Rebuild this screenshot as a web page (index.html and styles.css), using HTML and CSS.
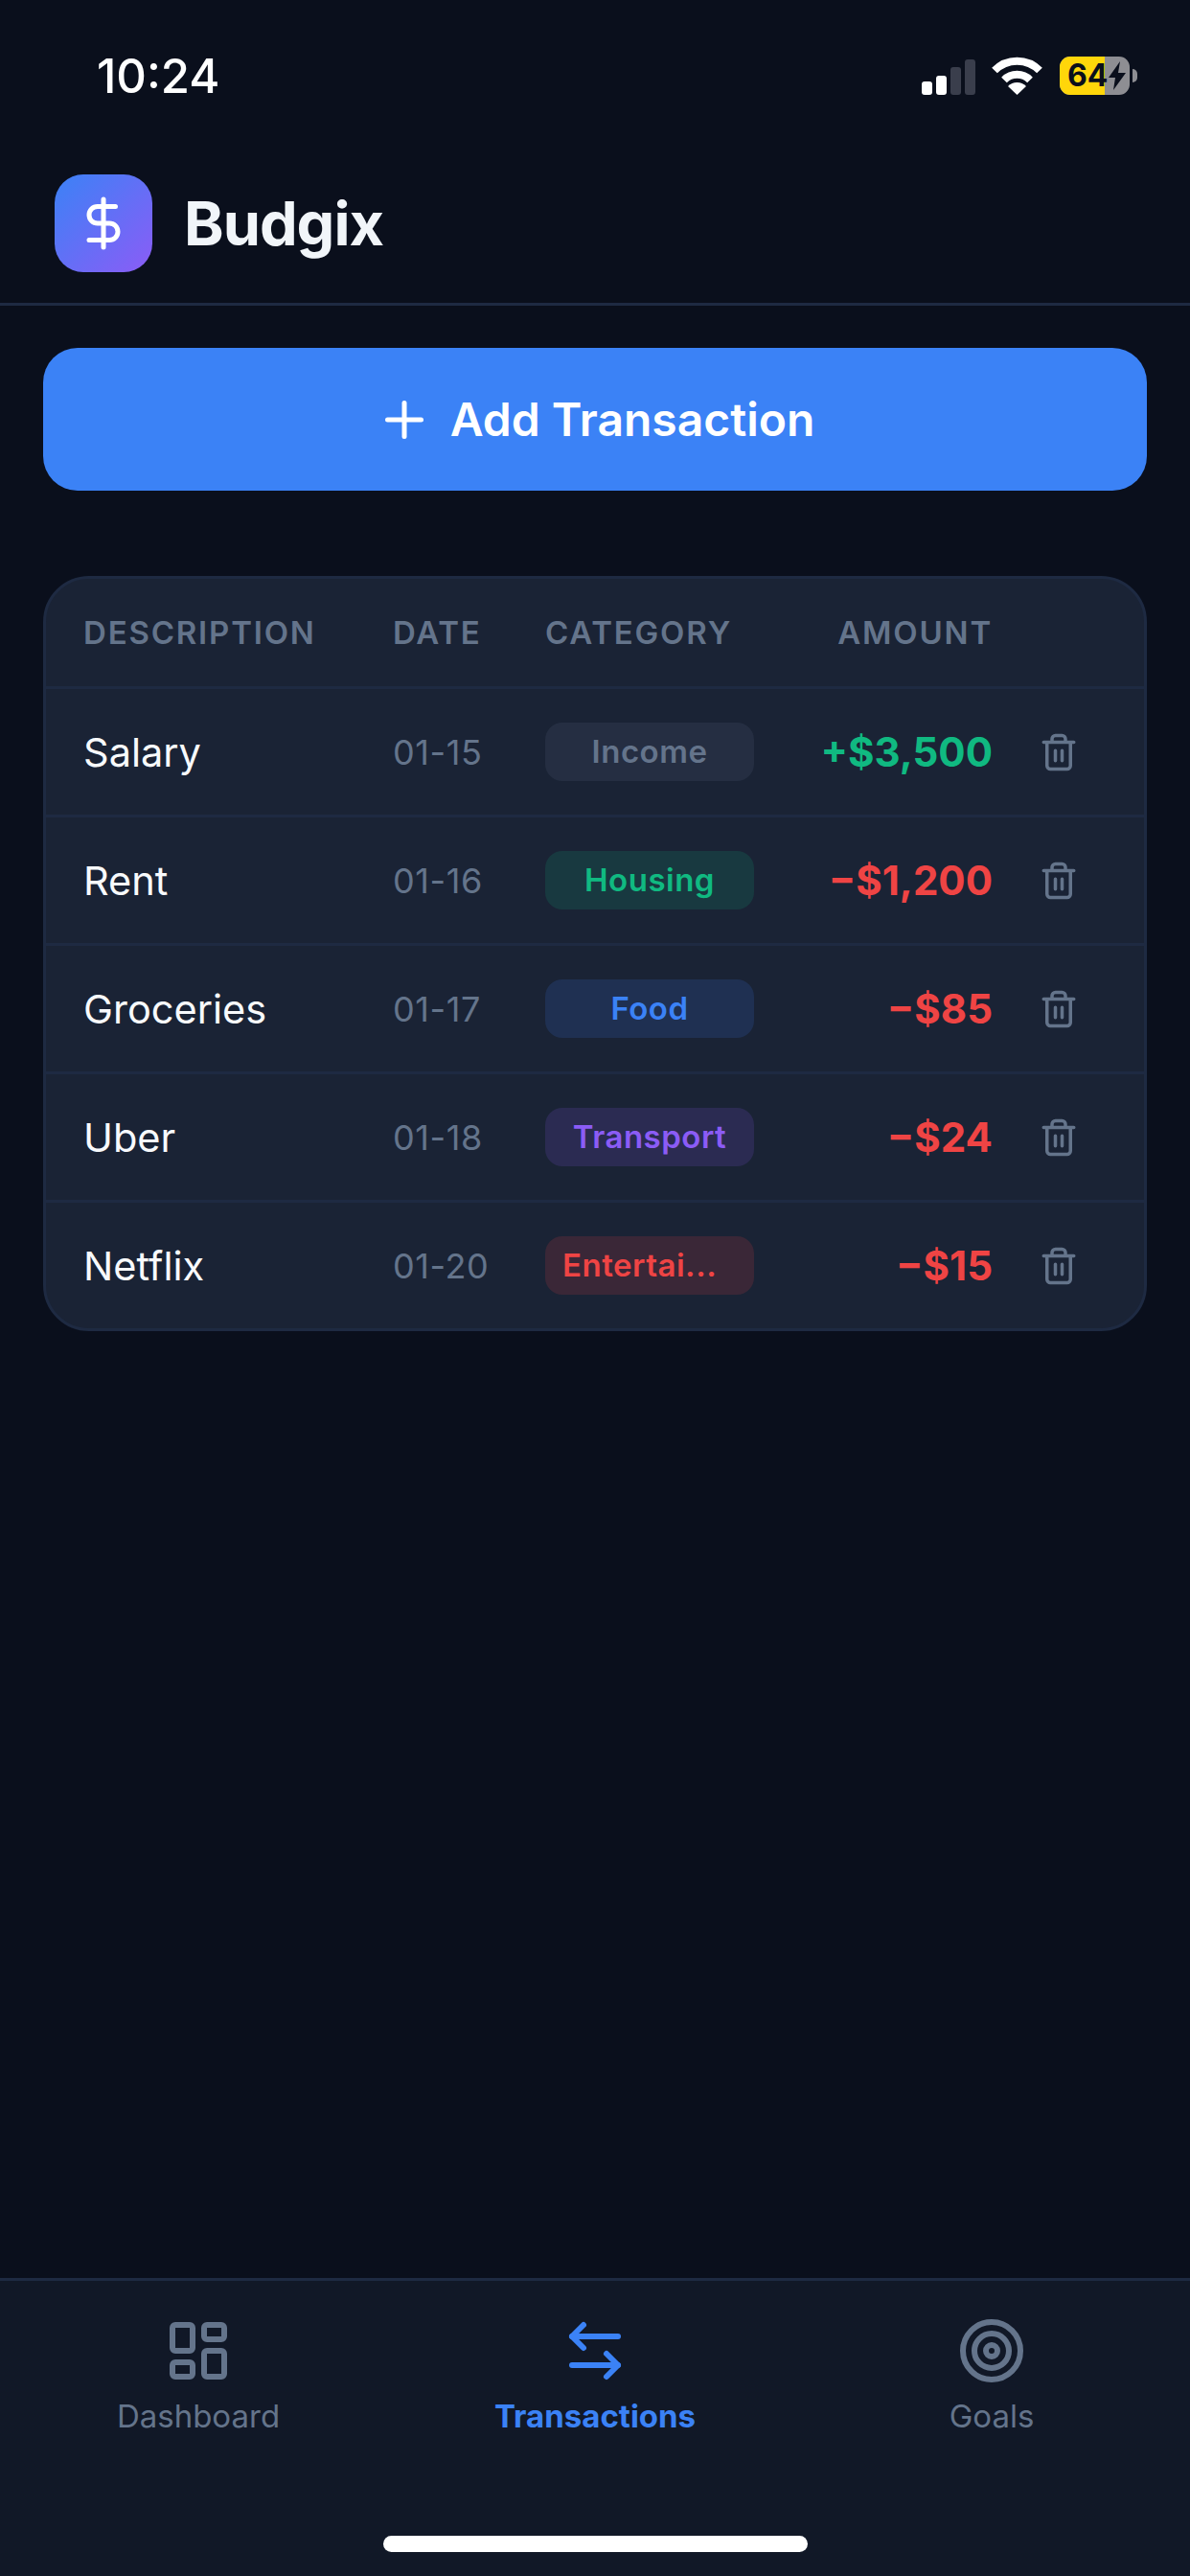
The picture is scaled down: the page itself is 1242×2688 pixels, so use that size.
FILE: index.html
```html
<!DOCTYPE html>
<html lang="en">
<head>
    <title>Budgix</title>
    <link rel="stylesheet" href="styles.css">
</head>
<body>
    <div id="app">
        <div class="status-bar">
            <div class="time">10:24</div>
            <div class="status-icons">
                <div class="signal">
                    <span class="bar bar-1"></span>
                    <span class="bar bar-2"></span>
                    <span class="bar bar-3"></span>
                    <span class="bar bar-4"></span>
                </div>
                <svg class="wifi" width="53" height="40" viewBox="0 0 53 40" fill="none" stroke="#fff" stroke-width="8">
                    <path d="M3 14.5a33 33 0 0 1 47 0"/>
                    <path d="M13 24.5a19 19 0 0 1 27 0"/>
                    <path d="M26.5 40 17 31a13.500 13.500 0 0 1 19 0z" fill="#fff" stroke="none"/>
                </svg>
                <div class="battery">
                    <div class="battery-body">
                        <div class="battery-fill"></div>
                        <span class="battery-num">64</span>
                        <svg class="bolt" width="20" height="30" viewBox="0 0 20 30">
                            <path d="M13 0 1 17h7l-2 13L19 12h-8z" fill="#0a0f1c"/>
                        </svg>
                    </div>
                    <span class="battery-cap"></span>
                </div>
            </div>
        </div>

        <header class="header">
            <div class="logo">
                <svg width="60" height="60" viewBox="0 0 24 24" fill="none" stroke="#fff" stroke-width="2" stroke-linecap="round" stroke-linejoin="round">
                    <line x1="12" x2="12" y1="2" y2="22"/>
                    <path d="M17 5H9.500a3.500 3.500 0 0 0 0 7h5a3.500 3.500 0 0 1 0 7H6"/>
                </svg>
            </div>
            <h1 class="title">Budgix</h1>
        </header>

        <main class="main">
            <button class="btn-add">
                <svg width="60" height="60" viewBox="0 0 24 24" fill="none" stroke="#fff" stroke-width="2" stroke-linecap="round" stroke-linejoin="round">
                    <path d="M5 12h14"/>
                    <path d="M12 5v14"/>
                </svg>
                Add Transaction
            </button>

            <div class="table">
                <div class="row row-head">
                    <div>DESCRIPTION</div>
                    <div>DATE</div>
                    <div>CATEGORY</div>
                    <div class="cell-amount">AMOUNT</div>
                    <div></div>
                </div>
                <div class="row">
                    <div class="desc">Salary</div>
                    <div class="date">01-15</div>
                    <div class="pill pill-income">Income</div>
                    <div class="cell-amount amount-plus">+$3,500</div>
                    <div class="cell-trash">
                        <svg class="trash" width="42" height="42" viewBox="0 0 24 24"><path d="M3 6h18M19 6v14c0 1-1 2-2 2H7c-1 0-2-1-2-2V6M8 6V4c0-1 1-2 2-2h4c1 0 2 1 2 2v2M10 11v6M14 11v6"/></svg>
                    </div>
                </div>
                <div class="row">
                    <div class="desc">Rent</div>
                    <div class="date">01-16</div>
                    <div class="pill pill-housing">Housing</div>
                    <div class="cell-amount amount-minus">−$1,200</div>
                    <div class="cell-trash">
                        <svg class="trash" width="42" height="42" viewBox="0 0 24 24"><path d="M3 6h18M19 6v14c0 1-1 2-2 2H7c-1 0-2-1-2-2V6M8 6V4c0-1 1-2 2-2h4c1 0 2 1 2 2v2M10 11v6M14 11v6"/></svg>
                    </div>
                </div>
                <div class="row">
                    <div class="desc">Groceries</div>
                    <div class="date">01-17</div>
                    <div class="pill pill-food">Food</div>
                    <div class="cell-amount amount-minus">−$85</div>
                    <div class="cell-trash">
                        <svg class="trash" width="42" height="42" viewBox="0 0 24 24"><path d="M3 6h18M19 6v14c0 1-1 2-2 2H7c-1 0-2-1-2-2V6M8 6V4c0-1 1-2 2-2h4c1 0 2 1 2 2v2M10 11v6M14 11v6"/></svg>
                    </div>
                </div>
                <div class="row">
                    <div class="desc">Uber</div>
                    <div class="date">01-18</div>
                    <div class="pill pill-transport">Transport</div>
                    <div class="cell-amount amount-minus">−$24</div>
                    <div class="cell-trash">
                        <svg class="trash" width="42" height="42" viewBox="0 0 24 24"><path d="M3 6h18M19 6v14c0 1-1 2-2 2H7c-1 0-2-1-2-2V6M8 6V4c0-1 1-2 2-2h4c1 0 2 1 2 2v2M10 11v6M14 11v6"/></svg>
                    </div>
                </div>
                <div class="row">
                    <div class="desc">Netflix</div>
                    <div class="date">01-20</div>
                    <div class="pill pill-fun">Entertai...</div>
                    <div class="cell-amount amount-minus">−$15</div>
                    <div class="cell-trash">
                        <svg class="trash" width="42" height="42" viewBox="0 0 24 24"><path d="M3 6h18M19 6v14c0 1-1 2-2 2H7c-1 0-2-1-2-2V6M8 6V4c0-1 1-2 2-2h4c1 0 2 1 2 2v2M10 11v6M14 11v6"/></svg>
                    </div>
                </div>
            </div>
        </main>

        <nav class="tabbar">
            <div class="tabs">
                <div class="tab">
                    <svg width="72" height="72" viewBox="0 0 24 24" fill="none" stroke="currentColor" stroke-width="2" stroke-linecap="round" stroke-linejoin="round">
                        <rect width="7" height="9" x="3" y="3" rx="1"/>
                        <rect width="7" height="5" x="14" y="3" rx="1"/>
                        <rect width="7" height="9" x="14" y="12" rx="1"/>
                        <rect width="7" height="5" x="3" y="16" rx="1"/>
                    </svg>
                    <span>Dashboard</span>
                </div>
                <div class="tab tab-active">
                    <svg width="72" height="72" viewBox="0 0 24 24" fill="none" stroke="currentColor" stroke-width="2" stroke-linecap="round" stroke-linejoin="round">
                        <path d="M8 3 4 7l4 4"/>
                        <path d="M4 7h16"/>
                        <path d="m16 21 4-4-4-4"/>
                        <path d="M20 17H4"/>
                    </svg>
                    <span>Transactions</span>
                </div>
                <div class="tab">
                    <svg width="72" height="72" viewBox="0 0 24 24" fill="none" stroke="currentColor" stroke-width="2" stroke-linecap="round" stroke-linejoin="round">
                        <circle cx="12" cy="12" r="10"/>
                        <circle cx="12" cy="12" r="6"/>
                        <circle cx="12" cy="12" r="2"/>
                    </svg>
                    <span>Goals</span>
                </div>
            </div>
            <div class="home-indicator"></div>
        </nav>
    </div>
</body>
</html>
```

FILE: styles.css
```css
* {
    box-sizing: border-box;
}
body {
    margin: 0;
    background-color: #0a0f1c;
    font-family: Inter, "Noto Sans", sans-serif;
    color: #f1f5f9;
}
#app {
    height: 2688px;
    display: flex;
    flex-direction: column;
}

/* status bar */
.status-bar {
    height: 132px;
    padding: 26px 55px 0 101px;
    display: flex;
    justify-content: space-between;
    align-items: center;
    flex-shrink: 0;
}
.time {
    font-size: 49px;
    font-weight: 500;
    color: #fff;
}
.status-icons {
    display: flex;
    align-items: flex-end;
}
.signal {
    display: flex;
    align-items: flex-end;
    gap: 4px;
    margin-right: 17px;
}
.bar {
    width: 11px;
    border-radius: 3px;
    background-color: #3a3e4c;
}
.bar-1 {
    height: 14px;
    background-color: #fff;
}
.bar-2 {
    height: 20px;
    background-color: #fff;
}
.bar-3 {
    height: 29px;
}
.bar-4 {
    height: 37px;
}
.wifi {
    margin-right: 18px;
}
.battery {
    display: flex;
    align-items: center;
}
.battery-body {
    position: relative;
    width: 73px;
    height: 40px;
    border-radius: 11px;
    background-color: #8e8e93;
    display: flex;
    align-items: center;
    padding-left: 8px;
}
.battery-fill {
    position: absolute;
    left: 0;
    top: 0;
    bottom: 0;
    width: 47px;
    border-radius: 11px 0 0 11px;
    background-color: #ffd60a;
}
.battery-num {
    position: relative;
    font-size: 32px;
    font-weight: 700;
    color: #0a0f1c;
    line-height: 40px;
}
.bolt {
    position: absolute;
    left: 50px;
    top: 5px;
}
.battery-cap {
    width: 5px;
    height: 14px;
    margin-left: 3px;
    border-radius: 0 5px 5px 0;
    background-color: #8e8e93;
}

/* header */
.header {
    height: 187px;
    padding: 50px 57px 0;
    display: flex;
    align-items: flex-start;
    gap: 33px;
    border-bottom: 3px solid #1e2a42;
    flex-shrink: 0;
}
.logo {
    width: 102px;
    height: 102px;
    border-radius: 30px;
    background: linear-gradient(135deg, #3b82f6, #8b5cf6);
    display: flex;
    align-items: center;
    justify-content: center;
}
.title {
    margin: 0;
    font-size: 63px;
    line-height: 102px;
    font-weight: 700;
    letter-spacing: -1px;
}

/* main */
.main {
    flex: 1;
    padding: 44px 45px 0;
}
.btn-add {
    width: 100%;
    height: 149px;
    border: none;
    border-radius: 36px;
    background-color: #3b82f6;
    color: #fff;
    font-family: inherit;
    font-size: 48px;
    font-weight: 600;
    display: flex;
    align-items: center;
    justify-content: center;
    gap: 18px;
}

/* table */
.table {
    margin-top: 89px;
    border: 3px solid #1e2a42;
    border-radius: 48px;
    background-color: #1a2335;
    overflow: hidden;
}
.row {
    height: 134px;
    padding-left: 39px;
    display: grid;
    grid-template-columns: 323px 159px 218px 249px 1fr;
    align-items: center;
    border-top: 3px solid #1e2a42;
}
.row-head {
    height: 112px;
    border-top: none;
    font-size: 33px;
    font-weight: 600;
    letter-spacing: 1.8px;
    color: #64748b;
}
.desc {
    font-size: 41.5px;
    font-weight: 400;
    color: #f8fafc;
}
.date {
    font-size: 36px;
    letter-spacing: 0.6px;
    color: #64748b;
}
.pill {
    height: 61px;
    padding: 0 18px;
    border-radius: 18px;
    font-size: 33px;
    font-weight: 600;
    line-height: 61px;
    letter-spacing: 0.5px;
    text-align: center;
    white-space: nowrap;
}
.pill-income {
    background-color: rgba(100, 116, 139, 0.15);
    color: #64748b;
}
.pill-housing {
    background-color: rgba(16, 185, 129, 0.15);
    color: #10b981;
}
.pill-food {
    background-color: rgba(59, 130, 246, 0.15);
    color: #3b82f6;
}
.pill-transport {
    background-color: rgba(139, 92, 246, 0.15);
    color: #8b5cf6;
}
.pill-fun {
    background-color: rgba(239, 68, 68, 0.15);
    color: #ef4444;
    text-align: left;
}
.cell-amount {
    text-align: right;
}
.amount-plus,
.amount-minus {
    font-size: 42px;
    font-weight: 700;
}
.amount-plus {
    color: #10b981;
}
.amount-minus {
    color: #ef4444;
}
.cell-trash {
    padding-left: 48px;
    display: flex;
}
.trash {
    fill: none;
    stroke: #64748b;
    stroke-width: 2;
    stroke-linecap: round;
    stroke-linejoin: round;
}

/* tab bar */
.tabbar {
    height: 311px;
    border-top: 3px solid #1e2a42;
    background-color: #111827;
    display: flex;
    flex-direction: column;
    align-items: center;
    flex-shrink: 0;
}
.tabs {
    width: 100%;
    padding-top: 37px;
    display: grid;
    grid-template-columns: repeat(3, 1fr);
}
.tab {
    display: flex;
    flex-direction: column;
    align-items: center;
    gap: 12px;
    font-size: 33px;
    color: #64748b;
}
.tab-active {
    color: #3b82f6;
    font-weight: 700;
}
.home-indicator {
    width: 443px;
    height: 17px;
    margin-top: auto;
    margin-bottom: 25px;
    border-radius: 9px;
    background-color: #fff;
}
```
